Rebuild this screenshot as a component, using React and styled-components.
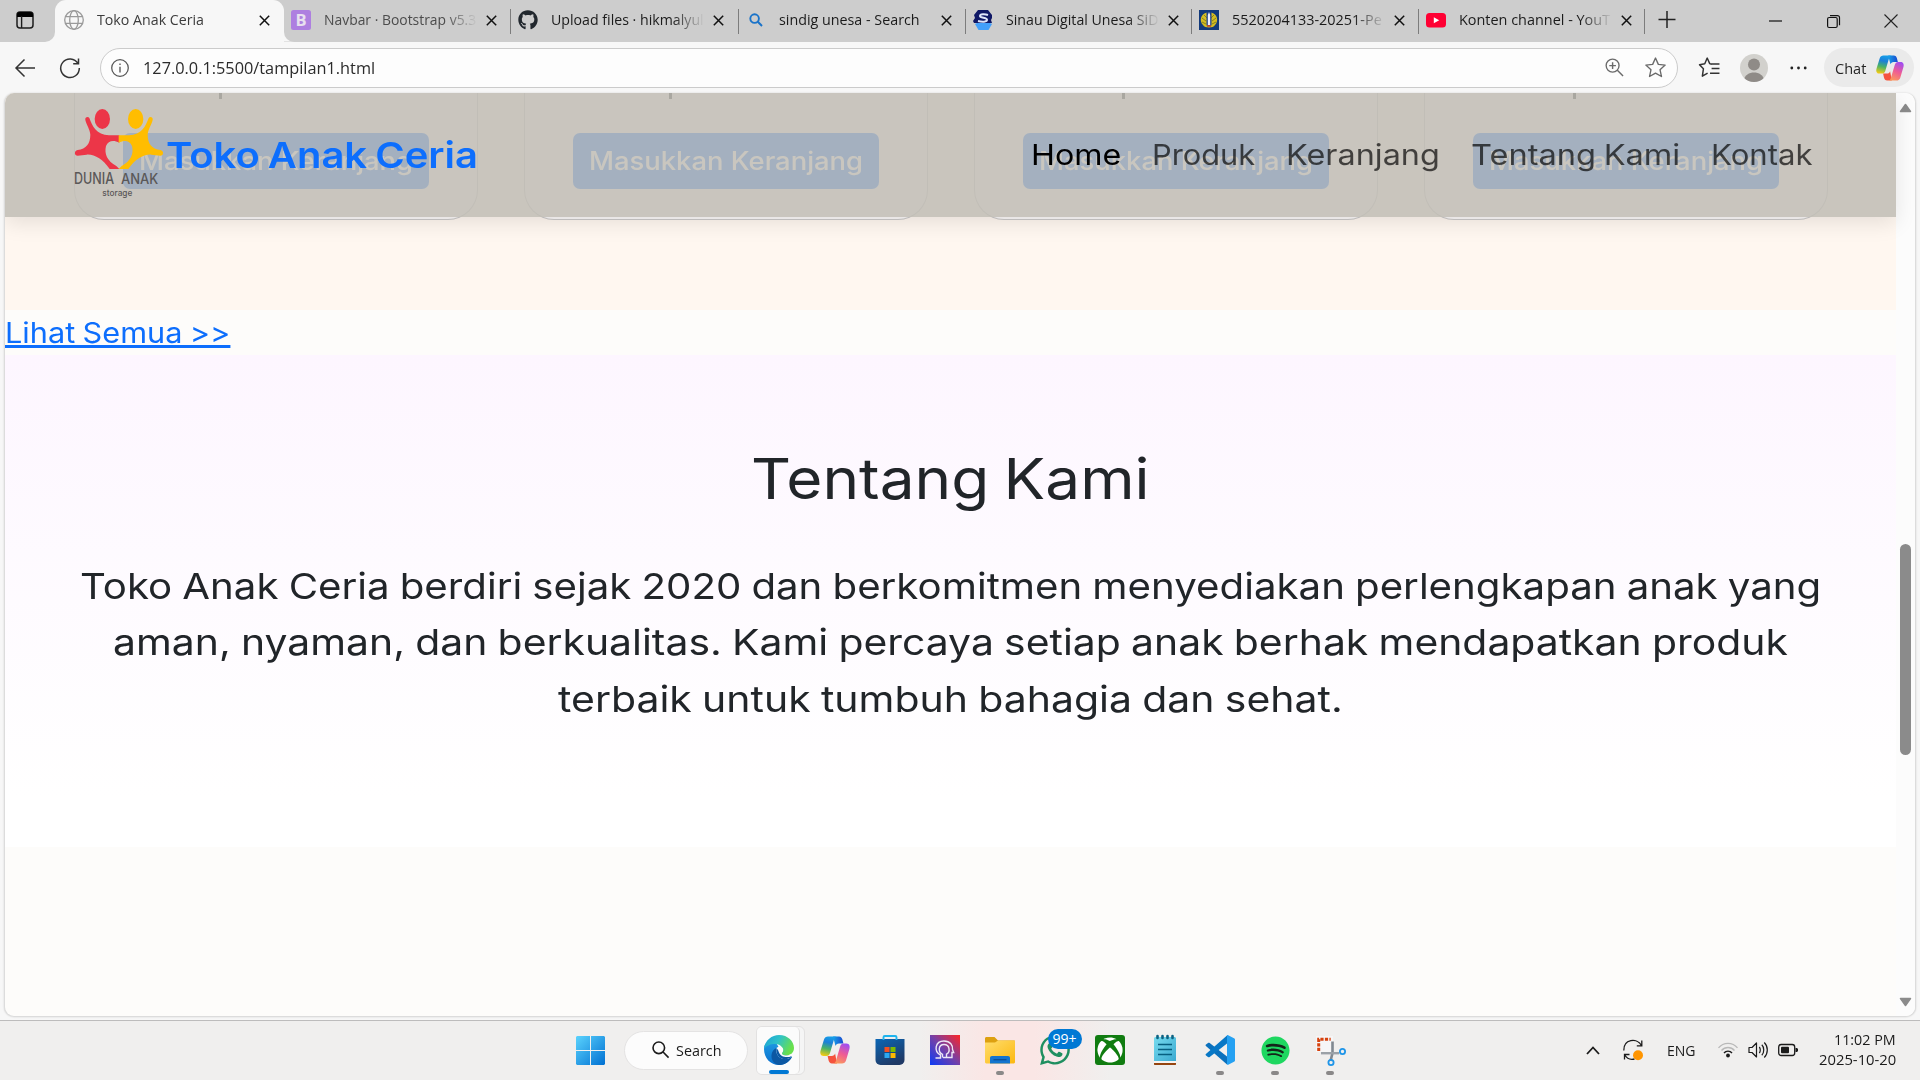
import React, { useLayoutEffect, useRef } from "react";
import styled, { createGlobalStyle } from "styled-components";
import { FaGithub, FaSpotify, FaWhatsapp, FaXbox } from "react-icons/fa";

const Global = createGlobalStyle`
  * { box-sizing: border-box; }
  html, body { margin: 0; padding: 0; overflow: hidden; }
  body { font-family: "Open Sans", "Noto Sans", sans-serif; background: #f7f7f7; }
`;

/* ---------- text set to a fixed measure ---------- */
const Measure = styled.span`
  display: inline-block;
  flex: none;
  width: ${(p) => p.$w}px;
  white-space: nowrap;
  text-align: left;
  vertical-align: top;
`;
const Stretch = styled.span`
  display: inline-block;
  transform-origin: 0 50%;
  vertical-align: top;
  text-decoration: inherit;
`;
function Fit({ w, children }) {
  const ref = useRef(null);
  useLayoutEffect(() => {
    const el = ref.current;
    el.style.transform = `scaleX(${w / el.offsetWidth})`;
  }, [w, children]);
  return (
    <Measure $w={w}>
      <Stretch ref={ref}>{children}</Stretch>
    </Measure>
  );
}

const Svg = styled.svg`
  display: block;
  flex: none;
  overflow: visible;
`;
const Icon = ({ s = 20, w, h, box = "0 0 20 20", children }) => (
  <Svg width={w || s} height={h || s} viewBox={box} fill="none">
    {children}
  </Svg>
);

/* ---------- window ---------- */
const Screen = styled.div`
  width: 1920px;
  height: 1080px;
  display: flex;
  flex-direction: column;
  background: #f7f7f7;
  overflow: hidden;
`;

/* ---------- tab strip ---------- */
const TabStrip = styled.div`
  display: flex;
  height: 42px;
  flex: none;
  background: #cdcdcd;
  border-bottom: 1px solid #e2e2e2;
`;
const TabActions = styled.div`
  width: 55px;
  height: 42px;
  padding: 10px 0 0 15px;
  border-radius: 0 0 10px 0;
  background: #cdcdcd;
`;
const StripStart = styled.div`
  width: 55px;
  height: 42px;
  background: #f7f7f7;
`;
const ActiveTab = styled.div`
  display: flex;
  align-items: center;
  width: 229px;
  height: 42px;
  padding: 0 14px 2px 9px;
  border-radius: 11px 11px 0 0;
  background: #f7f7f7;
  flex: none;
`;
const InactiveTabs = styled.div`
  display: flex;
  flex: 1;
  height: 42px;
  background: #cdcdcd;
  border-radius: 0 0 0 10px;
`;
const InactiveHolder = styled.div`
  flex: 1;
  display: flex;
  background: linear-gradient(90deg, #f7f7f7 12px, #cdcdcd 12px);
`;
const Tab = styled.div`
  display: flex;
  align-items: center;
  width: ${(p) => p.$w}px;
  height: 42px;
  padding: 0 0 2px 7px;
  flex: none;
`;
const TabIcon = styled.div`
  width: 20px;
  display: flex;
  justify-content: center;
  margin-right: 12.5px;
  flex: none;
`;
const TabTitle = styled.div`
  width: ${(p) => p.$w || 152}px;
  margin-top: -2px;
  overflow: hidden;
  font-size: 15px;
  line-height: 22px;
  color: ${(p) => p.$c || "#1b1b1b"};
  flex: none;
  mask-image: ${(p) => (p.$fade ? "linear-gradient(90deg,#000 80%,transparent 101%)" : "none")};
`;
const CloseSlot = styled.div`
  width: 11px;
  margin-left: ${(p) => p.$ml || 10}px;
`;
const Separator = styled.div`
  width: 1px;
  height: 25px;
  margin: 2px 0 0 auto;
  background: #7c7c7c;
`;
const NewTab = styled.div`
  padding: 11px 0 0 13px;
`;
const WindowControls = styled.div`
  display: flex;
  align-items: center;
  gap: 44px;
  margin-left: auto;
  padding-right: 22px;
`;

/* ---------- toolbar ---------- */
const Toolbar = styled.div`
  display: flex;
  align-items: center;
  height: 51px;
  flex: none;
  padding: 0 6px 0 15px;
  background: #f7f7f7;
`;
const NavButtons = styled.div`
  display: flex;
  flex: none;
  gap: 25px;
  width: 85px;
`;
const AddressBar = styled.div`
  display: flex;
  flex: none;
  align-items: center;
  width: 1578px;
  height: 40px;
  padding: 0 11px 0 10px;
  border: 1px solid #cbcbcb;
  border-radius: 20px;
  background: #fdfdfd;
`;
const Address = styled.div`
  margin-left: 14px;
  font-size: 17px;
  line-height: 24px;
  color: #2b2b2b;
  flex: 1;
`;
const AddressActions = styled.div`
  display: flex;
  align-items: center;
  gap: 21px;
`;
const ToolbarActions = styled.div`
  display: flex;
  flex: none;
  align-items: center;
  gap: 20px;
  margin-left: 21px;
`;
const Avatar = styled.div`
  width: 28px;
  height: 28px;
  border-radius: 50%;
  background: #d2d1cd;
  overflow: hidden;
`;
const ChatButton = styled.div`
  display: flex;
  flex: none;
  align-items: center;
  justify-content: space-between;
  width: 90px;
  height: 39px;
  margin-left: 16px;
  padding: 0 10px 0 11px;
  border-radius: 20px;
  background: #eaeaea;
  font-size: 15px;
  line-height: 22px;
  color: #242424;
`;

/* ---------- page ---------- */
const Viewport = styled.div`
  position: relative;
  display: flex;
  width: 1912px;
  height: 924px;
  margin-left: 4px;
  flex: none;
  border-radius: 10px;
  border: 1px solid #dcdcdc;
  border-top: 0;
  background: #fdfcfa;
  overflow: hidden;
  box-shadow: 0 0 2px rgba(0, 0, 0, 0.16);
  font-family: Inter, "Open Sans", sans-serif;
`;
const Page = styled.div`
  width: 1891px;
  color: #212529;
`;
const Navbar = styled.nav`
  position: absolute;
  top: 0;
  left: 0;
  display: flex;
  align-items: center;
  width: 1891px;
  height: 124px;
  padding: 0 83px 0 69px;
  background: rgba(191, 188, 180, 0.85);
  box-shadow: 0 6px 20px rgba(0, 0, 0, 0.1);
`;
const Brand = styled.div`
  display: flex;
  align-items: center;
  gap: 2px;
  font-size: 36px;
  font-weight: 600;
  line-height: 54px;
  word-spacing: -0.05em;
  color: #0d6efd;
`;
const LogoSlot = styled.div`
  margin-top: -4px;
`;
const NavLinks = styled.div`
  display: flex;
  gap: 31px;
  margin-left: auto;
`;
const NavLink = styled.span`
  font-size: 29px;
  line-height: 44px;
  word-spacing: -0.05em;
  color: ${(p) => (p.$active ? "#000" : "rgba(0,0,0,.68)")};
`;
const Products = styled.section`
  display: flex;
  gap: 46px;
  height: 217px;
  padding: 0 0 0 69px;
  background: #fff7f0;
`;
const Card = styled.div`
  display: flex;
  flex-direction: column;
  align-items: center;
  width: 404px;
  height: 127px;
  border: 1px solid rgba(0, 0, 0, 0.19);
  border-top: 0;
  border-radius: 0 0 30px 30px;
  background: #fbf8f8;
`;
const PriceTail = styled.div`
  align-self: flex-start;
  width: 3px;
  height: 6px;
  margin: 0 0 34px ${(p) => p.$x}px;
  background: #2b2f33;
`;
const CartButton = styled.div`
  display: flex;
  align-items: center;
  justify-content: center;
  width: 306px;
  height: 56px;
  border-radius: 7px;
  background: #0d6efd;
  color: #fff;
  font-size: 25px;
  font-weight: 500;
  line-height: 38px;
`;
const SeeAll = styled.div`
  height: 45px;
  font-size: 28.5px;
  line-height: 45px;
  word-spacing: -0.04em;
  color: #0d6efd;
  text-decoration: underline;
  text-decoration-thickness: 3px;
  text-underline-offset: 2px;
  text-decoration-skip-ink: none;

  span {
    text-decoration: inherit;
    text-underline-offset: 2px;
  }
`;
const About = styled.section`
  display: flex;
  flex-direction: column;
  align-items: center;
  height: 492px;
  padding-top: 88px;
  background: linear-gradient(#fdf6ff, #ffffff 90%);
`;
const AboutTitle = styled.h2`
  margin: 0 0 43px;
  font-size: 56px;
  font-weight: 400;
  line-height: 72px;
  word-spacing: -0.05em;
`;
const AboutLine = styled.div`
  font-size: 36px;
  line-height: 56.3px;
  word-spacing: -0.03em;
`;
const Scrollbar = styled.div`
  display: flex;
  flex-direction: column;
  align-items: center;
  width: 19px;
  padding: 10px 0 9px;
  background: #fcfcfc;
`;
const Thumb = styled.div`
  width: 11px;
  height: 211px;
  margin: 431px 0 auto;
  border-radius: 6px;
  background: #8b8b8b;
`;

/* ---------- taskbar ---------- */
const Taskbar = styled.div`
  display: flex;
  align-items: center;
  height: 60px;
  margin-top: 3px;
  padding: 0 0 1px 563px;
  flex: none;
  border-top: 1px solid #bdbcbc;
  background: linear-gradient(90deg, #f0efee 920px, #fae6e5 985px, #fae6e5 1035px, #f0efee 1110px);
`;
const Slot = styled.div`
  position: relative;
  display: flex;
  align-items: center;
  justify-content: center;
  width: 55px;
  height: 59px;
  flex: none;
`;
const SearchBox = styled.div`
  display: flex;
  align-items: center;
  gap: 7px;
  width: 124px;
  height: 39px;
  margin: 0 8px 0 5.5px;
  padding: 0 0 1px 27px;
  border: 1px solid #e4e3e3;
  border-radius: 20px;
  background: #fcfcfc;
  font-size: 15px;
  line-height: 22px;
  color: #1b1b1b;
`;
const EdgeStack = styled.div`
  width: 49px;
  height: 49px;
  margin: 0 3px 0 0;
  border: 1px solid #e2e1e1;
  border-radius: 6px;
  background: #f5f5f5;
  flex: none;
`;
const EdgeTile = styled.div`
  position: relative;
  display: flex;
  align-items: center;
  justify-content: center;
  width: 43px;
  height: 47px;
  padding-left: 2px;
  border-right: 1px solid #dedddd;
  border-radius: 5px;
  background: #fbfbfb;
`;
const Running = styled.div`
  position: absolute;
  left: ${(p) => (p.$active ? "53%" : "50%")};
  bottom: ${(p) => (p.$active ? 0 : 5)}px;
  width: ${(p) => (p.$active ? 20 : 8)}px;
  height: 4px;
  transform: translateX(-50%);
  border-radius: 2px;
  background: ${(p) => (p.$active ? "#0078d4" : "#8a8888")};
`;
const Badge = styled.div`
  position: absolute;
  top: 8px;
  left: 20px;
  display: flex;
  justify-content: center;
  width: 34px;
  height: 20px;
  border-radius: 10px;
  background: #0078d4;
  color: #fff;
  font-size: 14px;
  line-height: 20px;
`;
const XboxTile = styled.div`
  display: flex;
  align-items: center;
  justify-content: center;
  width: 30px;
  height: 30px;
  border-radius: 3px;
  background: #107c10;
`;
const SpotifyDisc = styled.div`
  display: flex;
  border-radius: 50%;
  background: radial-gradient(#14251a 60%, transparent 64%);
`;
const Tray = styled.div`
  display: flex;
  align-items: center;
  margin-left: auto;
  padding-right: 24px;
  font-size: 15px;
  line-height: 20px;
  color: #1b1b1b;
`;
const SyncSlot = styled.div`
  margin: 0 24px 0 23px;
`;
const Status = styled.div`
  display: flex;
  gap: 10px;
  margin: 0 20px 0 22px;
`;
const Clock = styled.div`
  display: flex;
  flex-direction: column;
  align-items: flex-end;
  width: 78px;
  padding-bottom: 2px;
`;

/* ---------- drawings ---------- */
const Close = () => (
  <Icon s={11} box="0 0 11 11">
    <path d="M.8.8l9.4 9.4M10.2.8L.8 10.2" stroke="#111" strokeWidth="1.5" />
  </Icon>
);
const Workspace = () => (
  <Icon>
    <rect x="2" y="2" width="16" height="16" rx="3" stroke="#1c1c1c" strokeWidth="1.5" />
    <path d="M2 7V5a3 3 0 013-3h10a3 3 0 013 3v2z" fill="#000" />
    <path d="M6.6 6v12" stroke="#1c1c1c" strokeWidth="1.4" />
  </Icon>
);
const Globe = () => (
  <Icon>
    <g stroke="#9a9a9a" strokeWidth="1.3">
      <circle cx="10" cy="10" r="9.3" />
      <ellipse cx="10" cy="10" rx="4.3" ry="9.3" />
      <path d="M1.5 6.6h17M1.5 13.4h17" />
    </g>
  </Icon>
);
const BootstrapIcon = () => (
  <Icon>
    <rect width="20" height="20" rx="2.5" fill="#ae7fe0" />
    <text x="4.4" y="16" fontFamily="Open Sans" fontSize="16.5" fontWeight="700" fill="#e8e0ef">B</text>
  </Icon>
);
const TabSearch = () => (
  <Icon s={14} box="0 0 14 14">
    <circle cx="5.6" cy="5.6" r="4.3" stroke="#1a73c9" strokeWidth="1.9" />
    <path d="M8.8 8.8l4.2 4.2" stroke="#1a73c9" strokeWidth="2" />
  </Icon>
);
const Sidia = () => (
  <Icon>
    <path d="M5 0h10l4 5v3l-1 2 1 3H1L0 11l2-3-1-3z" fill="#101866" />
    <path d="M4 13h13l2 1-3.5 6h-10L2 14z" fill="#43a0fb" />
    <path d="M15 5c-3-1.2-8-1.2-8 1s7 1.5 7 3.8-5 2.2-9 1.2" stroke="#dfe5fa" strokeWidth="2" />
  </Icon>
);
const Unesa = () => (
  <Icon>
    <rect width="20" height="20" fill="#123a7c" />
    <path d="M8 2.500C1.500 4 0 11 4 15c1.200 1.800 3 2.500 6 2.500s4.800-.7 6-2.500c4-4 2.500-11-4-12.500z" fill="#d5bd22" />
    <path d="M3 8l4 3M3 12l4 2M17 8l-4 3M17 12l-4 2M5 5l3 3M15 5l-3 3" stroke="#7d7a20" strokeWidth=".9" />
    <path d="M7.500 2h5v13.500h-5z" fill="#1b3f86" />
    <path d="M10 2l1.200 3v10H8.800V5z" fill="#eef0ff" />
    <path d="M8 16h4" stroke="#c43c2c" strokeWidth="1.4" />
  </Icon>
);
const YouTube = () => (
  <Icon w={20} h={15} box="0 0 20 15">
    <rect width="20" height="14.5" rx="3.5" fill="#f03" />
    <path d="M7.8 4.200v6l5.400-3z" fill="#fff" />
  </Icon>
);
const star = "M10 1l2.700 6 6.500.7-4.900 4.400 1.400 6.500L10 15.300l-5.700 3.300 1.400-6.500L.8 7.700 7.300 7z";

const Copilot = ({ s, id }) => (
  <Icon s={s} box="0 0 30 30">
    <defs>
      <linearGradient id={id + "a"} x1=".5" y1="0" x2=".3" y2="1">
        <stop offset="0" stopColor="#169ee8" />
        <stop offset=".3" stopColor="#1c7fd8" />
        <stop offset=".62" stopColor="#49b267" />
        <stop offset="1" stopColor="#f4cb12" />
      </linearGradient>
      <linearGradient id={id + "b"} x1=".7" y1="0" x2=".3" y2="1">
        <stop offset="0" stopColor="#a14df0" />
        <stop offset=".5" stopColor="#ef5c94" />
        <stop offset="1" stopColor="#fb9a5c" />
      </linearGradient>
      <linearGradient id={id + "c"} x1="0" y1="0" x2="1" y2="0">
        <stop offset="0" stopColor="#18a0e8" />
        <stop offset="1" stopColor="#1748cf" />
      </linearGradient>
    </defs>
    <path d="M13 1.500h6c2 0 3 1.500 3.400 3l1 4H19c-2 0-3 1-3.500 2.500z" fill={`url(#${id}c)`} />
    <path d="M17 28.500h-5c-2 0-3-1.500-3.400-3l-1-4.500h4c2 0 3-1 3.500-2.500z" fill="#f5533d" />
    <path d="M8 1.500h9c-2 0-2.600 1.500-3.100 3.300L10 18c-.6 2-1.500 3-3.500 3H3.500C.5 21-.2 18 .6 15.500L4 4.500C4.600 2.500 6 1.500 8 1.500z" fill={`url(#${id}a)`} />
    <path d="M22 28.500h-9c2 0 2.600-1.500 3.100-3.300L20 12c.6-2 1.500-3.500 3.500-3.500h3c3 0 3.700 3 2.900 5.500L26 25.500c-.6 2-2 3-4 3z" fill={`url(#${id}b)`} />
  </Icon>
);

const body =
  "M271 84C280 108 292 135 330 136H361V158C345 150 328 150 321 168C315 192 325 213 352 228L361 237H332C312 208 286 192 263 194L236 197C226 197 224 183 236 180C262 177 274 160 274 134C273 118 262 104 259 90C257 82 267 78 271 84Z";
const Logo = () => (
  <Icon s={90} box="225 54 270 270">
    <ellipse cx="310" cy="87" rx="23" ry="30" fill="#ec3648" />
    <ellipse cx="410" cy="87" rx="23" ry="30" fill="#ffbd00" />
    <path d={body} fill="#ec3648" />
    <path d={body} fill="#ffbd00" transform="translate(720 0) scale(-1 1)" />
    <g fill="#5a5858" fontFamily="Inter" fontWeight="500">
      <text x="225" y="282" fontSize="46" textLength="120" lengthAdjust="spacingAndGlyphs">DUNIA</text>
      <text x="366" y="281" fontSize="44" textLength="112" lengthAdjust="spacingAndGlyphs">ANAK</text>
      <text x="310" y="318" fontSize="27" textLength="90" lengthAdjust="spacingAndGlyphs">storage</text>
    </g>
  </Icon>
);

const Windows = () => (
  <Icon s={29} box="0 0 29 29">
    <defs>
      <linearGradient id="win" x1="0" y1="0" x2="1" y2="1">
        <stop offset="0" stopColor="#5bd3fd" />
        <stop offset="1" stopColor="#0070d2" />
      </linearGradient>
    </defs>
    <path fill="url(#win)" d="M1 0h13v14H0V1zM15 0h13l1 1v13H15zM0 15h14v14H1l-1-1zM15 15h14v13l-1 1H15z" />
  </Icon>
);
const Edge = () => (
  <Icon s={30} box="0 0 30 30">
    <defs>
      <linearGradient id="e1" x1="0" y1="0" x2="1" y2=".4">
        <stop offset="0" stopColor="#1a9fd8" />
        <stop offset=".5" stopColor="#2fc2c8" />
        <stop offset="1" stopColor="#69e04c" />
      </linearGradient>
      <linearGradient id="e2" x1="0" y1="0" x2="0" y2="1">
        <stop offset="0" stopColor="#1f9be3" />
        <stop offset="1" stopColor="#0a6fcd" />
      </linearGradient>
    </defs>
    <path d="M0 14C0 6 6 6 11 6l6 10 11 6c-3 5-7.500 8-13 8C6.500 30 0 23 0 14z" fill="url(#e2)" />
    <path d="M28 22c-3 5.500-8 8-13 8-5-1-8-5-7.500-10 .4-3.500 2.500-6 5-7-1 5 1 10 7 11 3.500.5 6-.5 8.500-2z" fill="#0c58a3" />
    <path d="M0 14C1 5 8 0 15 0c9 0 15 6.500 15 13 0 5-4 7.500-8 7.500-3 0-4.500-1.200-4-2.500 3-4-1-9-7-9-5 0-9 2-11 5z" fill="url(#e1)" />
    <path d="M12.500 13c2-2 5.500-1.500 6.500.7.7 1.600-.3 3.300-1 4.300-.5 1.500 1.500 2.500 4 2.500 1.500 0 3-.3 4.300-1 1.200-.5 2 .3 1.400 1.300l-1.200 1.700c-2 1.300-4 1.800-6.500 1.500-5.500-.7-8.500-5.500-7.500-11z" fill="#fbfbfb" />
    <path d="M12.500 13c-1 5 1.500 9.700 6.500 11 2.500.5 5 0 7.700-1.600l1-1.500c-4 2.200-11 1.600-12.700-3.400-.4-1.500-1-3-2.500-4.500z" fill="#0c58a3" />
  </Icon>
);
const Store = () => (
  <Icon s={30} box="0 0 30 30">
    <defs>
      <linearGradient id="st" x1="0" y1="0" x2=".5" y2="1">
        <stop offset="0" stopColor="#0b66b5" />
        <stop offset="1" stopColor="#1f3a66" />
      </linearGradient>
    </defs>
    <path d="M.5 4h29v21a5 5 0 01-5 5h-19a5 5 0 01-5-5z" fill="url(#st)" />
    <path d="M8.500 5V2.300C8.500 1.400 9 1 9.800 1h10.400c.8 0 1.300.4 1.300 1.300V5" stroke="#1eb4ee" strokeWidth="1.9" />
    <path d="M9.500 12h5v5h-5z" fill="#f25022" />
    <path d="M15.500 12h5v5h-5z" fill="#7fba00" />
    <path d="M9.500 18h5v5h-5z" fill="#2ba8f0" />
    <path d="M15.500 18h5v5h-5z" fill="#ffb900" />
  </Icon>
);
const HeadApp = () => (
  <Icon s={30} box="0 0 30 30">
    <defs>
      <linearGradient id="hd" x1="0" y1="1" x2="1" y2="0">
        <stop offset="0" stopColor="#0c3af5" />
        <stop offset=".5" stopColor="#7440a8" />
        <stop offset="1" stopColor="#ff2424" />
      </linearGradient>
    </defs>
    <rect width="30" height="30" fill="url(#hd)" />
    <g stroke="#ece6f5" strokeWidth="1.4">
      <path d="M5.500 23h5v-3C3.500 16.500 5 6 14 6c6.500 0 9 4.500 8.500 8.500l1.200 3h-1.700V22.500h-9" />
      <path d="M12.500 22.500v-3.200C8 17.500 8 9.500 14 9.500s6.500 7.500 2.500 9.700v3.300" />
    </g>
  </Icon>
);
const Explorer = () => (
  <Icon w={30} h={27} box="0 0 30 27">
    <defs>
      <linearGradient id="fx" x1="0" y1="0" x2="1" y2="1">
        <stop offset="0" stopColor="#ffdd6d" />
        <stop offset="1" stopColor="#fcb80f" />
      </linearGradient>
    </defs>
    <path d="M0 1.500C0 .6.600 0 1.500 0h8L13 3.500H29c.6 0 1 .4 1 1V8H0z" fill="#dda010" />
    <path d="M0 5.500h10l3-2h16.500l.5.500v21.500l-1 1H1l-1-1z" fill="url(#fx)" />
    <path d="M5 26.500V21c0-1.300.8-2 2-2h16c1.200 0 2 .7 2 2v5.500z" fill="#1374cf" />
    <path d="M8.500 22.700h13" stroke="#0a4f96" strokeWidth="1.3" />
  </Icon>
);
const Notepad = () => (
  <Icon w={22} h={31} box="0 0 22 31">
    <defs>
      <linearGradient id="np" x1="0" y1="0" x2="1" y2="1">
        <stop offset="0" stopColor="#77dcef" />
        <stop offset="1" stopColor="#3ba9d0" />
      </linearGradient>
    </defs>
    <path d="M0 26h22v3.500l-.5.500H.5l-.5-.5z" fill="#95450f" />
    <path d="M0 25h22v3H0z" fill="#f6f4f2" />
    <path d="M1 2h20l1 1v23H0V3z" fill="url(#np)" />
    <path d="M4 9.500h14M4 14.500h14M4 19.500h14" stroke="#075f80" strokeWidth="1.7" />
    <path d="M3.500 1v2M8.500 1v2M13.500 1v2M18.500 1v2" stroke="#0d6282" strokeWidth="2.6" strokeLinecap="round" />
  </Icon>
);
const VSCode = () => (
  <Icon s={30} box="0 0 30 30">
    <path d="M1 9.500l2-1.600c.6-.4 1.200-.3 1.700.1L22 21.500V29.500L.9 10.900c-.5-.5-.4-1 .1-1.400z" fill="#0b71bd" />
    <path d="M1 20.500l2 1.600c.6.4 1.200.3 1.700-.1L22 8.500V.500L.9 19.100c-.5.500-.4 1 .1 1.400z" fill="#0878c6" />
    <path d="M22 .3c.4-.3.800-.2 1.200 0L29 3.200c.6.3 1 .8 1 1.400v20.800c0 .6-.4 1.100-1 1.400l-5.800 2.900c-.4.200-.8.200-1.200 0z" fill="#25a1f2" />
  </Icon>
);
const Snip = () => (
  <Icon s={30} box="0 0 30 30">
    <rect x="1" y="1" width="17" height="16" fill="#f6f6f7" />
    <path d="M3.700 16V4.200h12" stroke="#d6420e" strokeWidth="3" strokeDasharray="3.2 1.3" />
    <path d="M17.500 6.500V18L15.500 26" stroke="#808890" strokeWidth="2.6" />
    <path d="M6 18.200h18" stroke="#9ba1a7" strokeWidth="2.4" />
    <circle cx="27.500" cy="16.500" r="2.600" stroke="#1f95e8" strokeWidth="1.8" />
    <circle cx="16" cy="27.500" r="2.600" stroke="#1f95e8" strokeWidth="1.8" />
  </Icon>
);

const tabs = [
  { title: "Navbar · Bootstrap v5.3", w: 152, fade: true, c: "#4c4c4c", icon: <BootstrapIcon />, size: 227 },
  { title: "Upload files · hikmalyul", w: 153, fade: true, icon: <FaGithub size={20} color="#22282e" />, size: 228 },
  { title: "sindig unesa - Search", w: 141, icon: <TabSearch />, size: 227 },
  { title: "Sinau Digital Unesa SiD", w: 152, fade: true, icon: <Sidia />, size: 226 },
  { title: "5520204133-20251-Pe", w: 150, fade: true, icon: <Unesa />, size: 227 },
  { title: "Konten channel - YouT", w: 151, fade: true, icon: <YouTube />, size: 226 },
];
const priceTails = [144, 144, 147, 148];

export default function App() {
  return (
    <Screen>
      <Global />
      <TabStrip>
        <StripStart>
          <TabActions>
            <Workspace />
          </TabActions>
        </StripStart>
        <ActiveTab>
          <TabIcon>
            <Globe />
          </TabIcon>
          <TabTitle $c="#3c3c3c" $w={153}>
            <Fit w={107}>Toko Anak Ceria</Fit>
          </TabTitle>
          <CloseSlot $ml={9.5}>
            <Close />
          </CloseSlot>
        </ActiveTab>
        <InactiveHolder>
          <InactiveTabs>
            {tabs.map((t) => (
              <Tab key={t.title} $w={t.size}>
                <TabIcon>{t.icon}</TabIcon>
                <TabTitle $fade={t.fade} $c={t.c}>
                  <Fit w={t.w}>{t.title}</Fit>
                </TabTitle>
                <CloseSlot>
                  <Close />
                </CloseSlot>
                <Separator />
              </Tab>
            ))}
            <NewTab>
              <Icon s={18} box="0 0 18 18">
                <path d="M9 0v17M.5 8.500h17" stroke="#222" strokeWidth="1.5" />
              </Icon>
            </NewTab>
            <WindowControls>
              <Icon s={14} box="0 0 14 14">
                <path d="M0 7h13" stroke="#111" strokeWidth="1.2" />
              </Icon>
              <Icon s={13} box="0 0 13 13">
                <rect x=".6" y="2.500" width="9.600" height="10" rx="1.500" stroke="#111" strokeWidth="1.2" />
                <path d="M3 .6h7.500a2 2 0 012 2v7.600" stroke="#111" strokeWidth="1.2" />
              </Icon>
              <Icon s={14} box="0 0 14 14">
                <path d="M.5.5l13 13M13.500.5l-13 13" stroke="#222" strokeWidth="1.1" />
              </Icon>
            </WindowControls>
          </InactiveTabs>
        </InactiveHolder>
      </TabStrip>

      <Toolbar>
        <NavButtons>
          <Icon>
            <path d="M20 10H1M9.500 1.500L1 10l8.500 8.500" stroke="#333" strokeWidth="1.5" />
          </Icon>
          <Icon>
            <path d="M18 5.500A9.300 9.300 0 1019.300 10M18.500.5v5.300h-5.300" stroke="#333" strokeWidth="1.5" />
          </Icon>
        </NavButtons>
        <AddressBar>
          <Icon s={18}>
            <circle cx="10" cy="10" r="9.200" stroke="#555" strokeWidth="1.4" />
            <path d="M10 8.500V15M10 5v1.600" stroke="#555" strokeWidth="1.5" />
          </Icon>
          <Address>
            <Fit w={232}>127.0.0.1:5500/tampilan1.html</Fit>
          </Address>
          <AddressActions>
            <Icon s={19}>
              <circle cx="8" cy="8" r="6.800" stroke="#6a6a6a" strokeWidth="1.4" />
              <path d="M13 13l6 6M8 4.500v7M4.500 8h7" stroke="#6a6a6a" strokeWidth="1.5" />
            </Icon>
            <Icon s={21}>
              <path d={star} stroke="#6a6a6a" strokeWidth="1.3" strokeLinejoin="round" />
            </Icon>
          </AddressActions>
        </AddressBar>
        <ToolbarActions>
          <Icon s={21}>
            <path d="M12 7L10.200 6.300 7.800 1 5.500 6.500.5 7.300l3.700 4-1 7 5-3M11 6.600h8.500M12 11h7.500M10.500 15.500h9" stroke="#333" strokeWidth="1.4" strokeLinejoin="round" />
          </Icon>
          <Avatar>
            <Icon s={28} box="0 0 28 28">
              <circle cx="14" cy="10.500" r="6" fill="#8f8b87" />
              <path d="M4 26c1-10 19-10 20 0l-4 4H8z" fill="#8f8b87" />
            </Icon>
          </Avatar>
          <Icon w={20} h={6} box="0 0 20 6">
            <circle cx="3.800" cy="3" r="1.400" fill="#222" />
            <circle cx="10.500" cy="3" r="1.400" fill="#222" />
            <circle cx="17.200" cy="3" r="1.400" fill="#222" />
          </Icon>
        </ToolbarActions>
        <ChatButton>
          <Fit w={31}>Chat</Fit>
          <Copilot s={28} id="chat" />
        </ChatButton>
      </Toolbar>

      <Viewport>
        <Page>
          <Products>
            {priceTails.map((x, i) => (
              <Card key={i}>
                <PriceTail $x={x} />
                <CartButton>
                  <Fit w={274}>Masukkan Keranjang</Fit>
                </CartButton>
              </Card>
            ))}
          </Products>
          <SeeAll>
            <Fit w={225}>Lihat Semua &gt;&gt;</Fit>
          </SeeAll>
          <About>
            <AboutTitle>
              <Fit w={399}>Tentang Kami</Fit>
            </AboutTitle>
            <AboutLine>
              <Fit w={1741}>Toko Anak Ceria berdiri sejak 2020 dan berkomitmen menyediakan perlengkapan anak yang</Fit>
            </AboutLine>
            <AboutLine>
              <Fit w={1675}>aman, nyaman, dan berkualitas. Kami percaya setiap anak berhak mendapatkan produk</Fit>
            </AboutLine>
            <AboutLine>
              <Fit w={785}>terbaik untuk tumbuh bahagia dan sehat.</Fit>
            </AboutLine>
          </About>
        </Page>
        <Scrollbar>
          <Icon w={13} h={10} box="0 0 13 10">
            <path d="M6.500 1.500L11.500 8.500h-10z" fill="#8b8b8b" stroke="#8b8b8b" strokeWidth="1.5" strokeLinejoin="round" />
          </Icon>
          <Thumb />
          <Icon w={13} h={10} box="0 0 13 10">
            <path d="M6.500 8.500L11.500 1.500h-10z" fill="#8b8b8b" stroke="#8b8b8b" strokeWidth="1.5" strokeLinejoin="round" />
          </Icon>
        </Scrollbar>
        <Navbar>
          <Brand>
            <LogoSlot>
              <Logo />
            </LogoSlot>
            <Fit w={312}>Toko Anak Ceria</Fit>
          </Brand>
          <NavLinks>
            <NavLink $active><Fit w={90}>Home</Fit></NavLink>
            <NavLink><Fit w={103}>Produk</Fit></NavLink>
            <NavLink><Fit w={154}>Keranjang</Fit></NavLink>
            <NavLink><Fit w={209}>Tentang Kami</Fit></NavLink>
            <NavLink><Fit w={102}>Kontak</Fit></NavLink>
          </NavLinks>
        </Navbar>
      </Viewport>

      <Taskbar>
        <Slot>
          <Windows />
        </Slot>
        <SearchBox>
          <Icon s={17}>
            <circle cx="8" cy="8" r="6.800" stroke="#1b1b1b" strokeWidth="1.9" />
            <path d="M13 13l6.500 6.500" stroke="#1b1b1b" strokeWidth="1.9" />
          </Icon>
          <Fit w={46}>Search</Fit>
        </SearchBox>
        <EdgeStack>
          <EdgeTile>
            <Edge />
            <Running $active />
          </EdgeTile>
        </EdgeStack>
        <Slot><Copilot s={30} id="task" /></Slot>
        <Slot><Store /></Slot>
        <Slot><HeadApp /></Slot>
        <Slot>
          <Explorer />
          <Running />
        </Slot>
        <Slot>
          <FaWhatsapp size={34} color="#1f8f60" />
          <Badge>
            <Fit w={24}>99+</Fit>
          </Badge>
        </Slot>
        <Slot>
          <XboxTile>
            <FaXbox size={26} color="#fff" />
          </XboxTile>
        </Slot>
        <Slot><Notepad /></Slot>
        <Slot>
          <VSCode />
          <Running />
        </Slot>
        <Slot>
          <SpotifyDisc>
            <FaSpotify size={29} color="#1ed760" />
          </SpotifyDisc>
          <Running />
        </Slot>
        <Slot>
          <Snip />
          <Running />
        </Slot>
        <Tray>
          <Icon w={14} h={9} box="0 0 14 9">
            <path d="M1 8l6-6.500L13 8" stroke="#1b1b1b" strokeWidth="1.8" />
          </Icon>
          <SyncSlot>
            <Icon s={20}>
              <path d="M.8 10.500C.5-1 14-2.500 18.500 5.500M18.800.5v5.300h-5M1.500 19.500v-5h5M1.500 14.500c2 3.500 6 5.500 10 4.500" stroke="#1b1b1b" strokeWidth="1.3" />
              <circle cx="15" cy="15.200" r="5" fill="#ff9500" />
            </Icon>
          </SyncSlot>
          <Fit w={29}>ENG</Fit>
          <Status>
            <Icon>
              <path d="M.5 7.800c5-6 14-6 19 0M3.500 10.500c3.500-4 9.500-4 13 0" stroke="#b9b9b9" strokeWidth="1.3" />
              <path d="M6 13c2-2.500 6-2.500 8 0" stroke="#1b1b1b" strokeWidth="1.4" />
              <circle cx="10" cy="15.500" r="1.900" fill="#1b1b1b" />
            </Icon>
            <Icon>
              <path d="M1 7.500h3L8.500 3v14L4 12.500H1z" stroke="#1b1b1b" strokeWidth="1.2" strokeLinejoin="round" />
              <path d="M11.300 7c1.300 1.500 1.300 4.500 0 6M13.800 4.800c2.600 2.500 2.600 8 0 10.400M16.300 2.500c4 4 4 11 0 15" stroke="#1b1b1b" strokeWidth="1.2" />
            </Icon>
            <Icon>
              <rect x=".7" y="4.500" width="16" height="11" rx="2.500" stroke="#1b1b1b" strokeWidth="1.3" />
              <rect x="3" y="6.700" width="8" height="6.600" rx="1" fill="#1b1b1b" />
              <path d="M17.500 8h1.500l1 1v2l-1 1h-1.500z" fill="#1b1b1b" />
            </Icon>
          </Status>
          <Clock>
            <Fit w={62}>11:02 PM</Fit>
            <Fit w={77}>2025-10-20</Fit>
          </Clock>
        </Tray>
      </Taskbar>
    </Screen>
  );
}
